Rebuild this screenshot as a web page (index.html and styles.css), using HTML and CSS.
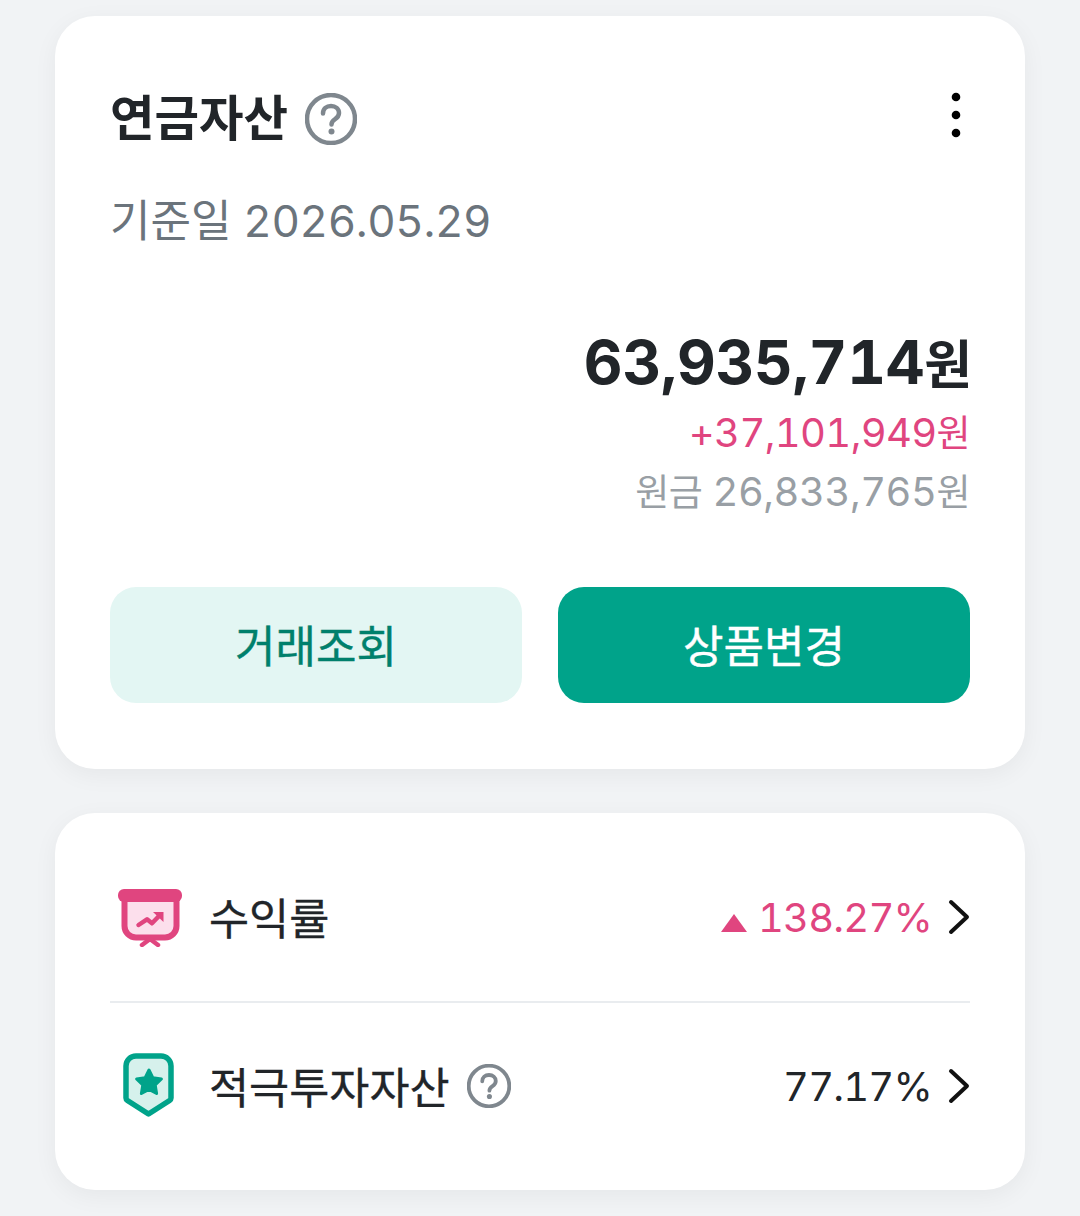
FILE: index.html
```html
<!DOCTYPE html>
<html lang="ko">
<head>
  <meta charset="utf-8">
  <title>연금자산</title>
  <link rel="stylesheet" href="styles.css">
</head>
<body>

  <section class="card asset">
    <div class="head">
      <h2>연금자산</h2>
      <svg class="help big" viewBox="0 0 52 52">
        <circle cx="26" cy="26" r="24" fill="none" stroke="#7f878e" stroke-width="4.500"/>
        <path d="M18 20.500c0-4.600 3.500-7.500 8-7.500s8 2.900 8 7c0 3.200-1.700 4.800-4.200 6.400-2.300 1.500-3.300 2.600-3.300 5.100" fill="none" stroke="#7f878e" stroke-width="4.500" stroke-linecap="round"/>
        <circle cx="26.500" cy="38.500" r="3" fill="#7f878e"/>
      </svg>
      <svg class="more" viewBox="0 0 10 46">
        <circle cx="5" cy="5" r="4.300"/>
        <circle cx="5" cy="23" r="4.300"/>
        <circle cx="5" cy="41" r="4.300"/>
      </svg>
    </div>
    <p class="date">기준일 <span>2026.05.29</span></p>

    <div class="sums">
      <div class="total">63,935,714<span class="won">원</span></div>
      <div class="gain">+37,101,949<span class="won">원</span></div>
      <div class="base"><span class="won">원금</span> 26,833,765<span class="won">원</span></div>
    </div>

    <div class="btns">
      <button class="btn light">거래조회</button>
      <button class="btn solid">상품변경</button>
    </div>
  </section>

  <section class="card list">
    <div class="row">
      <svg class="ico board" viewBox="0 0 64 60">
        <path d="M6.500 8h52v31a11.500 11.500 0 0 1-11.500 11.500H18A11.500 11.500 0 0 1 6.500 39z" fill="#fcdfec" stroke="#e0457f" stroke-width="6"/>
        <rect x="0" y="2" width="64" height="13" rx="6" fill="#e0457f"/>
        <path d="M24 58l8-6 8 6" fill="none" stroke="#e0457f" stroke-width="4.500" stroke-linecap="round" stroke-linejoin="round"/>
        <path d="M20.500 38l8.500-5.700 5 4L42 28" fill="none" stroke="#e0457f" stroke-width="4.500" stroke-linecap="round" stroke-linejoin="round"/>
        <path d="M35 25h10.500v10z" fill="#e0457f"/>
      </svg>
      <span class="label">수익률</span>
      <span class="val up"><i class="tri"></i>138.27%</span>
      <svg class="arrow" viewBox="0 0 22 36"><path d="M3 3l16 15L3 33" fill="none" stroke="#111" stroke-width="4" stroke-linecap="round" stroke-linejoin="round"/></svg>
    </div>
    <div class="row">
      <svg class="ico shield" viewBox="0 0 64 68">
        <path d="M18 3h25a10 10 0 0 1 10 10v32a3 3 0 0 1-1.400 2.500L30.500 61 9.400 47.500A3 3 0 0 1 8 45V13A10 10 0 0 1 18 3z" fill="#d6f1ec" stroke="#00a38a" stroke-width="5.500" stroke-linejoin="round"/>
        <path d="M31 17l3.800 7.700 8.600 1.300-6.200 6 1.400 8.500-7.600-4-7.600 4 1.400-8.500-6.200-6 8.600-1.300z" fill="#00a38a" stroke="#00a38a" stroke-width="3" stroke-linejoin="round"/>
      </svg>
      <span class="label">적극투자자산</span>
      <svg class="help small" viewBox="0 0 52 52">
        <circle cx="26" cy="26" r="24" fill="none" stroke="#7f878e" stroke-width="4.500"/>
        <path d="M18 20.500c0-4.600 3.500-7.500 8-7.500s8 2.900 8 7c0 3.200-1.700 4.800-4.200 6.400-2.300 1.500-3.300 2.600-3.300 5.100" fill="none" stroke="#7f878e" stroke-width="4.500" stroke-linecap="round"/>
        <circle cx="26.500" cy="38.500" r="3" fill="#7f878e"/>
      </svg>
      <span class="val">77.17%</span>
      <svg class="arrow" viewBox="0 0 22 36"><path d="M3 3l16 15L3 33" fill="none" stroke="#111" stroke-width="4" stroke-linecap="round" stroke-linejoin="round"/></svg>
    </div>
  </section>

</body>
</html>
```

FILE: styles.css
```css
* {
  box-sizing: border-box;
}
html, body {
  height: 100%;
}
body {
  margin: 0;
  padding: 16px 55px 0;
  background: #f1f3f5;
  color: #212529;
  font-family: Inter, "Noto Sans CJK KR", sans-serif;
  font-variant-numeric: tabular-nums;
  overflow: hidden;
}
.card {
  background: #fff;
  border-radius: 40px;
  box-shadow: 0 6px 24px rgba(0, 0, 0, 0.05);
}
.asset {
  height: 753px;
  padding: 72px 55px 0;
}
.head {
  display: flex;
  align-items: center;
  height: 62px;
}
h2 {
  margin: 0;
  font-size: 48.4px;
  font-weight: 700;
  line-height: 62px;
}
.help.big {
  width: 52px;
  height: 52px;
  margin-left: 17px;
}
.more {
  width: 10px;
  height: 46px;
  margin-left: auto;
  margin-right: 9px;
  margin-bottom: 8px;
}
.date {
  margin: 40px 0 0;
  font-size: 44px;
  line-height: 62px;
  color: #6b747c;
}
.date span {
  letter-spacing: -0.4px;
}
.sums {
  margin-top: 72px;
  text-align: right;
}
.total {
  margin-right: -2px;
  font-size: 60px;
  font-weight: 700;
  line-height: 76px;
  letter-spacing: -0.2px;
}
.total .won {
  font-size: 52px;
}
.gain {
  font-size: 40px;
  line-height: 58px;
  letter-spacing: -0.65px;
  color: #e0457f;
}
.base {
  font-size: 40px;
  line-height: 58px;
  letter-spacing: -0.5px;
  color: #999fa5;
}
.won {
  font-size: 37px;
}
.btns {
  display: flex;
  gap: 36px;
  margin-top: 65px;
}
.btn {
  flex: 1;
  height: 116px;
  padding-bottom: 4px;
  border: 0;
  border-radius: 26px;
  font-family: inherit;
  font-size: 44px;
  font-weight: 400;
  -webkit-text-stroke: 0.4px currentColor;
}
.light {
  background: #e3f6f3;
  color: #00806c;
}
.solid {
  background: #00a38a;
  color: #fff;
}
.list {
  height: 377px;
  margin-top: 44px;
  padding: 20px 55px 0;
}
.row {
  display: flex;
  align-items: center;
  height: 168px;
}
.row + .row {
  border-top: 2px solid #e9ecef;
}
.ico {
  width: 64px;
  margin-left: 8px;
  margin-right: 27px;
}
.board {
  height: 60px;
}
.shield {
  height: 68px;
  margin-top: 2px;
}
.label {
  margin-bottom: 3px;
  font-size: 43.6px;
  font-weight: 400;
  -webkit-text-stroke: 0.3px currentColor;
}
.help.small {
  width: 44px;
  height: 44px;
  margin-left: 17px;
}
.val {
  margin-left: auto;
  font-size: 40px;
  letter-spacing: -0.8px;
  display: flex;
  align-items: center;
}
.up {
  color: #e0457f;
}
.tri {
  width: 0;
  height: 0;
  margin: 12px 11px 0 0;
  border-left: 13px solid transparent;
  border-right: 13px solid transparent;
  border-bottom: 18px solid #e0457f;
}
.arrow {
  width: 22px;
  height: 36px;
  margin-left: 16px;
}
```
